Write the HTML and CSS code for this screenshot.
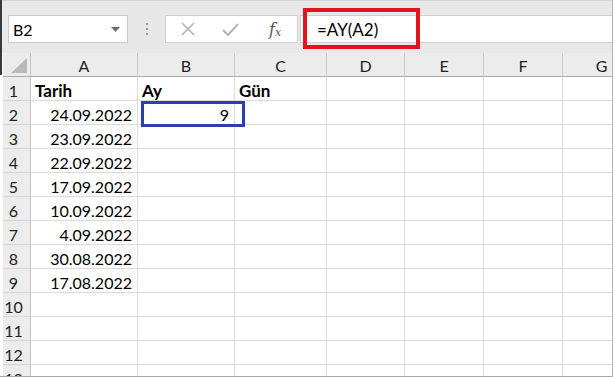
FILE: index.html
```html
<!DOCTYPE html>
<html lang="tr">

<head>
    <meta charset="UTF-8">
    <meta name="viewport" content="width=device-width, initial-scale=1.0">
    <title>AY formülü</title>
    <link rel="stylesheet" href="styles.css">
</head>

<body>
    <div class="window">
        <div class="toolbar">
            <div class="namebox">
                <span>B2</span>
                <svg class="dropdown" width="9" height="5" viewBox="0 0 9 5"><path d="M0 0h9L4.5 5z" fill="#6b6b6b"/></svg>
            </div>
            <div class="grip">
                <i></i><i></i><i></i>
            </div>
            <div class="fbuttons">
                <svg width="14" height="14" viewBox="0 0 14 14"><path d="M1 1l12 12M13 1L1 13" stroke="#b4b4b4" stroke-width="1.6" fill="none"/></svg>
                <svg width="17" height="13" viewBox="0 0 17 13"><path d="M1 7l5 5L16 1" stroke="#b4b4b4" stroke-width="2" fill="none"/></svg>
                <span class="fx">f<sub>x</sub></span>
            </div>
            <div class="formula">
                <span class="formula-text">=AY(A2)</span>
                <div class="highlight"></div>
            </div>
        </div>

        <div class="sheet">
            <div class="corner"><svg width="16" height="15" viewBox="0 0 16 15"><path d="M16 0v15H0z" fill="#b9b9b9"/></svg></div>
            <div class="colhead">A</div>
            <div class="colhead">B</div>
            <div class="colhead">C</div>
            <div class="colhead">D</div>
            <div class="colhead">E</div>
            <div class="colhead">F</div>
            <div class="colhead">G</div>

            <div class="rowhead">1</div>
            <div class="cell bold">Tarih</div>
            <div class="cell bold">Ay</div>
            <div class="cell bold">Gün</div>
            <div class="cell"></div><div class="cell"></div><div class="cell"></div><div class="cell"></div>

            <div class="rowhead">2</div>
            <div class="cell num">24.09.2022</div>
            <div class="cell num active">9<div class="selection"></div></div>
            <div class="cell"></div><div class="cell"></div><div class="cell"></div><div class="cell"></div><div class="cell"></div>

            <div class="rowhead">3</div>
            <div class="cell num">23.09.2022</div>
            <div class="cell"></div><div class="cell"></div><div class="cell"></div><div class="cell"></div><div class="cell"></div><div class="cell"></div>

            <div class="rowhead">4</div>
            <div class="cell num">22.09.2022</div>
            <div class="cell"></div><div class="cell"></div><div class="cell"></div><div class="cell"></div><div class="cell"></div><div class="cell"></div>

            <div class="rowhead">5</div>
            <div class="cell num">17.09.2022</div>
            <div class="cell"></div><div class="cell"></div><div class="cell"></div><div class="cell"></div><div class="cell"></div><div class="cell"></div>

            <div class="rowhead">6</div>
            <div class="cell num">10.09.2022</div>
            <div class="cell"></div><div class="cell"></div><div class="cell"></div><div class="cell"></div><div class="cell"></div><div class="cell"></div>

            <div class="rowhead">7</div>
            <div class="cell num">4.09.2022</div>
            <div class="cell"></div><div class="cell"></div><div class="cell"></div><div class="cell"></div><div class="cell"></div><div class="cell"></div>

            <div class="rowhead">8</div>
            <div class="cell num">30.08.2022</div>
            <div class="cell"></div><div class="cell"></div><div class="cell"></div><div class="cell"></div><div class="cell"></div><div class="cell"></div>

            <div class="rowhead">9</div>
            <div class="cell num">17.08.2022</div>
            <div class="cell"></div><div class="cell"></div><div class="cell"></div><div class="cell"></div><div class="cell"></div><div class="cell"></div>

            <div class="rowhead">10</div>
            <div class="cell"></div><div class="cell"></div><div class="cell"></div><div class="cell"></div><div class="cell"></div><div class="cell"></div><div class="cell"></div>

            <div class="rowhead">11</div>
            <div class="cell"></div><div class="cell"></div><div class="cell"></div><div class="cell"></div><div class="cell"></div><div class="cell"></div><div class="cell"></div>

            <div class="rowhead">12</div>
            <div class="cell"></div><div class="cell"></div><div class="cell"></div><div class="cell"></div><div class="cell"></div><div class="cell"></div><div class="cell"></div>

            <div class="rowhead">13</div>
            <div class="cell"></div><div class="cell"></div><div class="cell"></div><div class="cell"></div><div class="cell"></div><div class="cell"></div><div class="cell"></div>
        </div>
    </div>
</body>

</html>
```

FILE: styles.css
```css
body {
    margin: 0;
    background-color: #fff;
    font-family: Lato, "Open Sans", sans-serif;
    color: #000;
}

.window {
    position: relative;
    width: 612px;
    height: 376px;
    overflow: hidden;
    background-color: #fff;
    border-right: 1px solid #b4b4b4;
    border-bottom: 1px solid #a8a8a8;
}

/* dark edge of the window behind */
.window::before {
    content: "";
    position: absolute;
    left: 0;
    top: 0;
    width: 2px;
    height: 75px;
    background-color: #3a3a3a;
    z-index: 3;
}

.toolbar {
    display: flex;
    align-items: flex-start;
    height: 53px;
    padding-top: 14px;
    box-sizing: border-box;
    background-color: #e8e8e8;
    border-top: 1px solid #d6d6d6;
}

.namebox {
    display: flex;
    align-items: center;
    justify-content: space-between;
    box-sizing: border-box;
    width: 120px;
    height: 28px;
    margin-left: 8px;
    padding: 0 7px 0 4px;
    background-color: #fff;
    border: 1px solid #c9c9c9;
    font-size: 16px;
}

.grip {
    display: flex;
    flex-direction: column;
    gap: 3px;
    width: 37px;
    padding-top: 8px;
    align-items: center;
}

.grip i {
    display: block;
    width: 2px;
    height: 2px;
    background-color: #9c9c9c;
}

.fbuttons {
    display: flex;
    align-items: center;
    box-sizing: border-box;
    width: 133px;
    height: 28px;
    padding: 0 12px 0 15px;
    gap: 27px;
    background-color: #fff;
    border: 1px solid #cfcfcf;
}

.fx {
    font-family: "DejaVu Serif", "Liberation Serif", serif;
    font-style: italic;
    font-size: 16px;
    color: #555;
    margin-left: 3px;
}

.fx sub {
    font-size: 11px;
    vertical-align: -1px;
}

.formula {
    position: relative;
    flex: 1;
    display: flex;
    align-items: center;
    box-sizing: border-box;
    height: 28px;
    margin-left: 2px;
    padding-left: 16px;
    background-color: #fff;
    border: 1px solid #cfcfcf;
    border-right: none;
    font-size: 17px;
}

.highlight {
    position: absolute;
    left: 2px;
    top: -8px;
    width: 117px;
    height: 41px;
    box-sizing: border-box;
    border: 4px solid #e3131e;
}

.sheet {
    display: grid;
    grid-template-columns: 28px 107px 97px 92px 78px 79px 79px 78px;
    grid-template-rows: 24px;
    grid-auto-rows: 24px;
    margin-left: 3px;
    width: 609px;
    overflow: hidden;
}

.corner {
    display: flex;
    align-items: flex-end;
    justify-content: flex-end;
    padding: 0 3px 3px 0;
    background-color: #ececec;
    border-bottom: 1px solid #ababab;
    border-right: 1px solid #c4c4c4;
    box-sizing: border-box;
}

.colhead {
    display: flex;
    align-items: center;
    justify-content: center;
    box-sizing: border-box;
    background-color: #ececec;
    border-bottom: 1px solid #ababab;
    border-right: 1px solid #cacaca;
    font-size: 16px;
    color: #222;
    padding-top: 2px;
}

.rowhead {
    display: flex;
    align-items: center;
    justify-content: center;
    box-sizing: border-box;
    padding-right: 6px;
    background-color: #ececec;
    border-bottom: 1px solid #d4d4d4;
    border-right: 1px solid #c4c4c4;
    font-size: 16px;
    color: #222;
    padding-top: 3px;
}

.cell {
    position: relative;
    display: flex;
    align-items: center;
    box-sizing: border-box;
    padding: 3px 4px 0;
    border-bottom: 1px solid #dcdcdc;
    border-right: 1px solid #dcdcdc;
    font-size: 16px;
    white-space: nowrap;
}

.cell.bold {
    font-weight: bold;
    font-size: 17px;
}

.cell.num {
    justify-content: flex-end;
    padding-right: 5px;
}

.selection {
    position: absolute;
    left: 3px;
    top: 0;
    width: 104px;
    height: 26px;
    box-sizing: border-box;
    border: 3px solid #2d3eaf;
    z-index: 2;
}
```
